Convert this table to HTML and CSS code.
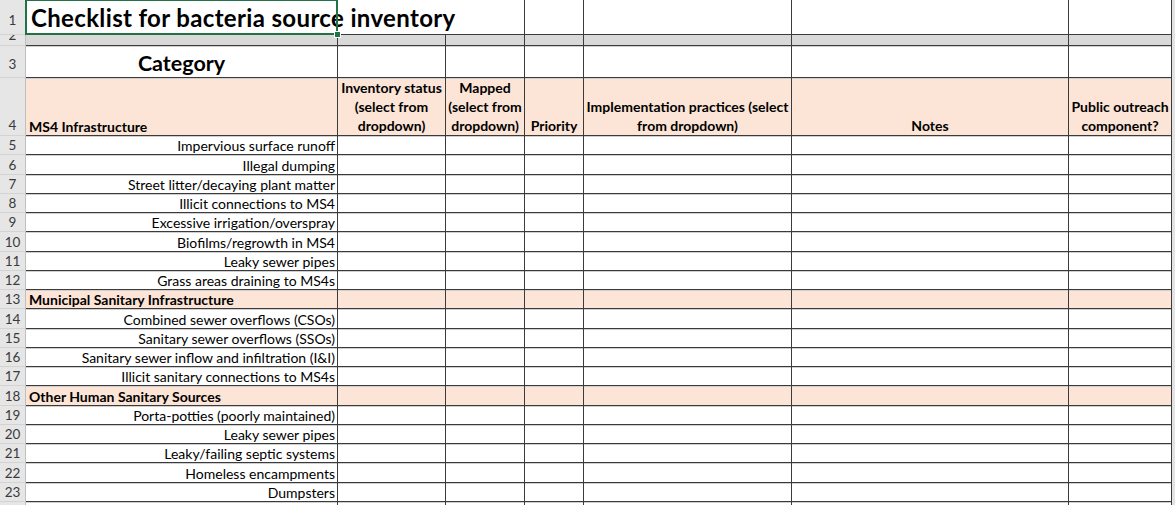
FILE: index.html
```html
<!DOCTYPE html>
<html>
<head>
<meta charset="utf-8">
<title>Checklist for bacteria source inventory</title>
<link rel="stylesheet" href="styles.css">
</head>
<body>
<div class="sheet">
  <div class="row r1">
    <div class="h">1</div>
    <div class="c title sel"><span>Checklist for bacteria source inventory</span></div>
    <div class="c nb"></div>
    <div class="c"></div>
    <div class="c"></div>
    <div class="c"></div>
    <div class="c"></div>
    <div class="c"></div>
    <div class="s"></div>
  </div>
  <div class="row r2">
    <div class="h cut"><span>2</span></div>
    <div class="c"></div><div class="c"></div><div class="c"></div><div class="c"></div><div class="c"></div><div class="c"></div><div class="c"></div>
    <div class="s"></div>
  </div>
  <div class="row r3">
    <div class="h">3</div>
    <div class="c cat">Category</div>
    <div class="c"></div><div class="c"></div><div class="c"></div><div class="c"></div><div class="c"></div><div class="c"></div>
    <div class="s"></div>
  </div>
  <div class="row r4 sec">
    <div class="h">4</div>
    <div class="c lbl">MS4 Infrastructure</div>
    <div class="c hd">Inventory status<br>(select from<br>dropdown)</div>
    <div class="c hd">Mapped<br>(select from<br>dropdown)</div>
    <div class="c hd">Priority</div>
    <div class="c hd">Implementation practices (select<br>from dropdown)</div>
    <div class="c hd">Notes</div>
    <div class="c hd">Public outreach<br>component?</div>
    <div class="s"></div>
  </div>
  <div class="row"><div class="h">5</div><div class="c it">Impervious surface runoff</div><div class="c"></div><div class="c"></div><div class="c"></div><div class="c"></div><div class="c"></div><div class="c"></div><div class="s"></div></div>
  <div class="row"><div class="h">6</div><div class="c it">Illegal dumping</div><div class="c"></div><div class="c"></div><div class="c"></div><div class="c"></div><div class="c"></div><div class="c"></div><div class="s"></div></div>
  <div class="row"><div class="h">7</div><div class="c it">Street litter/decaying plant matter</div><div class="c"></div><div class="c"></div><div class="c"></div><div class="c"></div><div class="c"></div><div class="c"></div><div class="s"></div></div>
  <div class="row"><div class="h">8</div><div class="c it">Illicit connections to MS4</div><div class="c"></div><div class="c"></div><div class="c"></div><div class="c"></div><div class="c"></div><div class="c"></div><div class="s"></div></div>
  <div class="row"><div class="h">9</div><div class="c it">Excessive irrigation/overspray</div><div class="c"></div><div class="c"></div><div class="c"></div><div class="c"></div><div class="c"></div><div class="c"></div><div class="s"></div></div>
  <div class="row"><div class="h">10</div><div class="c it">Biofilms/regrowth in MS4</div><div class="c"></div><div class="c"></div><div class="c"></div><div class="c"></div><div class="c"></div><div class="c"></div><div class="s"></div></div>
  <div class="row"><div class="h">11</div><div class="c it">Leaky sewer pipes</div><div class="c"></div><div class="c"></div><div class="c"></div><div class="c"></div><div class="c"></div><div class="c"></div><div class="s"></div></div>
  <div class="row"><div class="h">12</div><div class="c it">Grass areas draining to MS4s</div><div class="c"></div><div class="c"></div><div class="c"></div><div class="c"></div><div class="c"></div><div class="c"></div><div class="s"></div></div>
  <div class="row sec"><div class="h">13</div><div class="c lbl">Municipal Sanitary Infrastructure</div><div class="c"></div><div class="c"></div><div class="c"></div><div class="c"></div><div class="c"></div><div class="c"></div><div class="s"></div></div>
  <div class="row"><div class="h">14</div><div class="c it">Combined sewer overflows (CSOs)</div><div class="c"></div><div class="c"></div><div class="c"></div><div class="c"></div><div class="c"></div><div class="c"></div><div class="s"></div></div>
  <div class="row"><div class="h">15</div><div class="c it">Sanitary sewer overflows (SSOs)</div><div class="c"></div><div class="c"></div><div class="c"></div><div class="c"></div><div class="c"></div><div class="c"></div><div class="s"></div></div>
  <div class="row"><div class="h">16</div><div class="c it">Sanitary sewer inflow and infiltration (I&amp;I)</div><div class="c"></div><div class="c"></div><div class="c"></div><div class="c"></div><div class="c"></div><div class="c"></div><div class="s"></div></div>
  <div class="row"><div class="h">17</div><div class="c it">Illicit sanitary connections to MS4s</div><div class="c"></div><div class="c"></div><div class="c"></div><div class="c"></div><div class="c"></div><div class="c"></div><div class="s"></div></div>
  <div class="row sec"><div class="h">18</div><div class="c lbl">Other Human Sanitary Sources</div><div class="c"></div><div class="c"></div><div class="c"></div><div class="c"></div><div class="c"></div><div class="c"></div><div class="s"></div></div>
  <div class="row"><div class="h">19</div><div class="c it">Porta-potties (poorly maintained)</div><div class="c"></div><div class="c"></div><div class="c"></div><div class="c"></div><div class="c"></div><div class="c"></div><div class="s"></div></div>
  <div class="row"><div class="h">20</div><div class="c it">Leaky sewer pipes</div><div class="c"></div><div class="c"></div><div class="c"></div><div class="c"></div><div class="c"></div><div class="c"></div><div class="s"></div></div>
  <div class="row"><div class="h">21</div><div class="c it">Leaky/failing septic systems</div><div class="c"></div><div class="c"></div><div class="c"></div><div class="c"></div><div class="c"></div><div class="c"></div><div class="s"></div></div>
  <div class="row"><div class="h">22</div><div class="c it">Homeless encampments</div><div class="c"></div><div class="c"></div><div class="c"></div><div class="c"></div><div class="c"></div><div class="c"></div><div class="s"></div></div>
  <div class="row"><div class="h">23</div><div class="c it">Dumpsters</div><div class="c"></div><div class="c"></div><div class="c"></div><div class="c"></div><div class="c"></div><div class="c"></div><div class="s"></div></div>
  <div class="row"><div class="h"></div><div class="c"></div><div class="c"></div><div class="c"></div><div class="c"></div><div class="c"></div><div class="c"></div><div class="c"></div><div class="s"></div></div>
</div>
</body>
</html>
```

FILE: styles.css
```css
:root {
  --cols: 26px 312px 108px 79px 59px 208px 277px 103px 3px;
  --line: #3b3b3b;
}

body {
  margin: 0;
  background: #fff;
  overflow: hidden;
  font-family: Lato, "Open Sans", sans-serif;
}

.sheet {
  width: 1175px;
  height: 505px;
  overflow: hidden;
  display: flex;
  flex-direction: column;
}

.row {
  display: grid;
  grid-template-columns: var(--cols);
  height: 19.26px;
  flex: none;
}

.r1 { height: 35px; }
.r2 { height: 11px; }
.r3 { height: 32px; }
.r4 { height: 58px; }

.h {
  box-sizing: border-box;
  background: #e6e6e6;
  border-right: 1px solid #bfbfbf;
  border-bottom: 1px solid #d3d3d3;
  color: #3a3a3a;
  font-size: 13.5px;
  display: flex;
  align-items: flex-end;
  justify-content: center;
  padding-bottom: 1px;
  overflow: hidden;
}

.r1 .h { padding-bottom: 6px; }
.r3 .h { padding-bottom: 5px; }
.r4 .h { padding-bottom: 2px; }

.h.cut {
  align-items: flex-start;
  padding: 0;
}
.h.cut span {
  display: block;
  height: 5px;
  line-height: 0;
  overflow: hidden;
  margin-top: 0;
}

.s {
  background: #e3e3e3;
}

.c {
  box-sizing: border-box;
  border-right: 1px solid var(--line);
  border-bottom: 1px solid var(--line);
  box-shadow: inset 0 1px 0 #cfcfcf;
  display: flex;
  align-items: flex-end;
  overflow: hidden;
  white-space: nowrap;
  font-size: 14px;
  color: #000;
  padding-bottom: 0;
}

.r1 .c { box-shadow: none; }
.r1 .c.nb { border-right: none; }

.r2 .c {
  background: #d9d9d9;
  box-shadow: none;
}

.title {
  position: relative;
  overflow: visible;
  font-weight: 700;
  font-size: 24px;
  letter-spacing: 0.35px;
  padding: 0 0 2px 5px;
  border-right: none;
  z-index: 1;
}

.sel::after {
  content: "";
  position: absolute;
  left: -1px;
  top: 0;
  right: 0;
  bottom: -1px;
  border: 2px solid #217346;
  border-top-width: 1px;
  pointer-events: none;
}

.sel::before {
  content: "";
  position: absolute;
  right: -3px;
  bottom: -4px;
  width: 5px;
  height: 5px;
  background: #217346;
  border: 1px solid #fff;
  z-index: 2;
}

.cat {
  justify-content: center;
  font-weight: 700;
  font-size: 21.5px;
  padding-bottom: 1px;
}

.sec .c {
  background: #fce4d6;
}

.lbl {
  font-weight: 700;
  font-size: 14px;
  padding-left: 3px;
}

.hd {
  font-weight: 700;
  font-size: 14px;
  justify-content: center;
  text-align: center;
  line-height: 19px;
  padding-bottom: 0;
}

.it {
  justify-content: flex-end;
  padding-right: 2px;
}
```
